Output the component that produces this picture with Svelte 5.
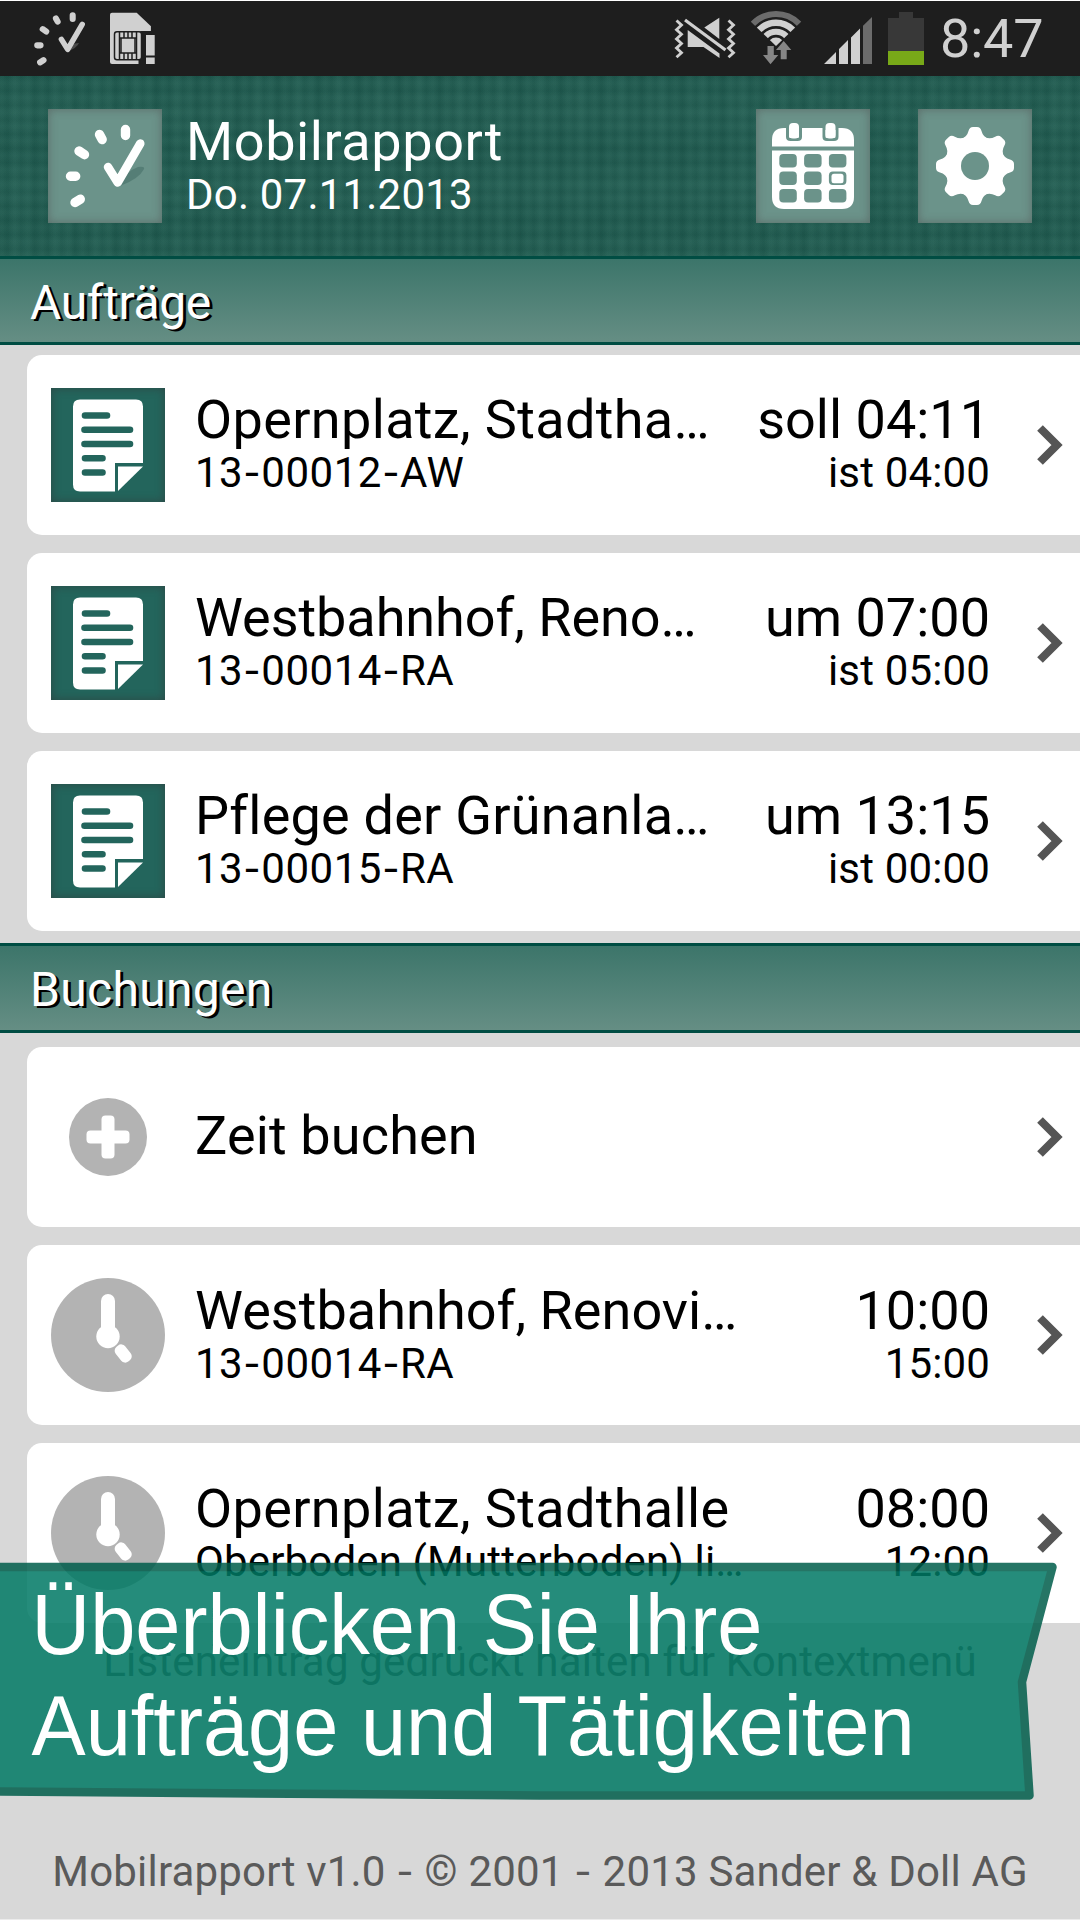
<script>
  // `ls` is the letter spacing of the title in pixels
  const jobs = [
    { title: 'Opernplatz, Stadtha…', ls: 0.35, sub: '13-00012-AW', right: 'soll 04:11', rightSub: 'ist 04:00' },
    { title: 'Westbahnhof, Reno…', ls: -0.05, sub: '13-00014-RA', right: 'um 07:00', rightSub: 'ist 05:00' },
    { title: 'Pflege der Grünanla…', ls: 0.22, sub: '13-00015-RA', right: 'um 13:15', rightSub: 'ist 00:00' },
  ];
  const bookings = [
    { icon: 'plus', title: 'Zeit buchen', ls: 0.15 },
    { icon: 'clock', title: 'Westbahnhof, Renovi…', ls: 0.05, sub: '13-00014-RA', right: '10:00', rightSub: '15:00' },
    { icon: 'clock', title: 'Opernplatz, Stadthalle', ls: 0.35, sub: 'Oberboden (Mutterboden) li…', right: '08:00', rightSub: '12:00' },
  ];
  const cells = [0, 1, 2].flatMap((r) => [0, 1, 2].map((c) => ({ x: 23.3 + c * 24.8, y: 45 + r * 17.5 })));
</script>

{#snippet dial()}
  <g stroke-linecap="round" fill="none">
    <g stroke-width="9.4">
      <path d="M77.5 20.5v6M51.500 25.500l2.700 5M31 42l5.500 3.700M22.500 67.200h5.200M27 93.500l5.300-3.300" />
    </g>
    <path d="M60 58l9.700 15.500L92.300 34.500" stroke-width="8.500" stroke-linejoin="round" />
  </g>
{/snippet}

{#snippet dashed(text)}
  {#each text.split('-') as part, i}{#if i > 0}<span class="dash">-</span>{/if}{part}{/each}
{/snippet}

{#snippet row(item, kind)}
  <li class="card">
    <div class="lead">
      {#if kind === 'doc'}
        <div class="doc">
          <svg viewBox="0 0 114 114" width="114" height="114">
            <path d="M29 11.500h56q7 0 7 7V75H64v28.500H29q-7 0-7-7V18.500q0-7 7-7z" fill="#fff" />
            <path d="M67 78.500h25L67 103z" fill="#fff" />
            <path d="M34 27.500h22M33.500 41.800h45.500M33.500 56h45.500M34 70.300h17.500M34 84.500h17.500" stroke="#23655c" stroke-width="6.600" stroke-linecap="round" />
          </svg>
        </div>
      {:else if kind === 'plus'}
        <svg viewBox="0 0 114 114" width="114" height="114">
          <circle cx="57" cy="57" r="39" fill="#b3b3b3" />
          <rect x="50.500" y="35.500" width="13" height="43" rx="4" fill="#fff" />
          <rect x="35.500" y="50.500" width="43" height="13" rx="4" fill="#fff" />
        </svg>
      {:else}
        <svg viewBox="0 0 114 114" width="114" height="114">
          <circle cx="57" cy="57" r="57" fill="#b3b3b3" />
          <path d="M57 23v34" stroke="#fff" stroke-width="14" stroke-linecap="round" />
          <circle cx="57" cy="58.500" r="11.700" fill="#fff" />
          <rect x="-6" y="-9.500" width="12" height="19" rx="5" transform="translate(72.200 75.500) rotate(-38)" fill="#fff" />
        </svg>
      {/if}
    </div>
    <div class="texts">
      <div class="t1" style="letter-spacing: {item.ls}px">{item.title}</div>
      {#if item.sub}<div class="t2" class:code={item.sub.includes('-')}>{@render dashed(item.sub)}</div>{/if}
    </div>
    {#if item.right}
      <div class="texts end">
        <div class="t1">{item.right}</div>
        <div class="t2">{item.rightSub}</div>
      </div>
    {/if}
    <svg class="chev" viewBox="0 0 26 40" width="26" height="40">
      <path d="M3 3l17 17L3 37" fill="none" stroke="#555" stroke-width="8" />
    </svg>
  </li>
{/snippet}

<div class="screen">
  <div class="status">
    <svg viewBox="0 1 200 75" width="200" height="75">
      <path d="M68 51Q71 43 79 43Q77 48 68 51z" fill="#4a4a4a" />
      <g stroke="#d0d0d0" transform="translate(22.700 2) scale(.645)">{@render dial()}</g>
      <path d="M112 12.700h24.700L150.700 26v38H112q-2 0-2-2V14.700q0-2 2-2z" fill="#d0d0d0" />
      <path d="M138.500 64V34q0-3 3-3H160v35h-21.500z" fill="#1e1e1e" />
      <path d="M150.700 31v-5h-14v5z" fill="#d0d0d0" />
      <g fill="#d0d0d0" stroke="#1e1e1e" stroke-width="1.500">
        <rect x="114.500" y="31.700" width="27" height="28" rx="2.500" />
        <path d="M119.500 32v27.500M136.500 32v27.500M120 38h16.500M120 53h16.500M124 32v6M128 32v6M132 32v6M124 53v6M128 53v6M132 53v6" />
      </g>
      <path d="M121 38v15M135 38v15" stroke="#1e1e1e" stroke-width="1.500" />
      <path d="M146 35h8.700v20.500H146zM146 57.500h8.700V64H146z" fill="#d0d0d0" />
    </svg>
    <div class="grow"></div>
    <svg viewBox="660 1 280 75" width="280" height="75">
      <defs>
        <clipPath id="fan"><path d="M776 46L734 5.500H818z" /></clipPath>
      </defs>
      <g fill="none" stroke="#d0d0d0">
        <path d="M676.500 20.500l5 4.600-5 4.600 5 4.600-5 4.600 5 4.600-5 4.600 5 4.600-5 4.600" stroke-width="2.800" />
        <path d="M728.500 20.500l5 4.600-5 4.600 5 4.600-5 4.600 5 4.600-5 4.600 5 4.600-5 4.600" stroke-width="2.800" />
        <path d="M685 20l40.500 30" stroke-width="3.200" />
      </g>
      <path d="M719.300 17.700V39L704.300 27.500zM687.700 30L719.500 53.500V58L703.500 47H687.700z" fill="#d0d0d0" />
      <g clip-path="url(#fan)" fill="none">
        <circle cx="776" cy="46" r="32" stroke="#6c6c6c" stroke-width="6" />
        <circle cx="776" cy="46" r="23.300" stroke="#d0d0d0" stroke-width="6.500" />
        <circle cx="776" cy="46" r="14.300" stroke="#d0d0d0" stroke-width="6" />
        <circle cx="776" cy="46" r="8.500" fill="#d0d0d0" />
      </g>
      <path d="M767.500 46h6.300v9h4.500L770.500 64.300 763 55h4.500zM780.700 59.300h6V50h4.600L783.700 41 776 50h4.700z" fill="#868686" stroke="#1e1e1e" stroke-width="2" paint-order="stroke" />
      <path d="M824 64l12-12v12zM839 64V49l9-9v24zM851 64V37.500l9-9V64z" fill="#d0d0d0" />
      <path d="M863 64V25.700l9-8.700v47z" fill="#6c6c6c" />
      <path d="M888 65V18h11v-6h14v6h11v47z" fill="#383838" />
      <path d="M888 51h36v14h-36z" fill="#78a918" />
    </svg>
    <time>8:47</time>
  </div>

  <header class="top">
    <div class="tile">
      <svg viewBox="0 0 114 114" width="114" height="114">
        <path d="M72 77Q78 62 90 58Q97 57 96 60Q91 70 72 77z" fill="#3f6a61" opacity=".5" />
        <g stroke="#fff">{@render dial()}</g>
      </svg>
    </div>
    <div class="brand">
      <h1>Mobilrapport</h1>
      <p>Do. 07.11.2013</p>
    </div>
    <div class="tile">
      <svg viewBox="0 0 114 114" width="114" height="114">
        <path d="M16 37.500V31Q16 19 28 19H86Q98 19 98 31v6.500zM16 41.500h82V88q0 12-12 12H28q-12 0-12-12z" fill="#fff" />
        <g fill="#fff" stroke="#6b938a" stroke-width="3">
          <path d="M31.500 18v10q0 2.500 3 2.500h7q3 0 3-2.500V18M68 18v10q0 2.500 3 2.500h7q3 0 3-2.500V18" />
        </g>
        <path d="M31.500 17h13v4h-13zM68 17h13v4H68z" fill="#6b938a" />
        <rect x="33" y="14" width="10" height="15.500" rx="4" fill="#fff" />
        <rect x="69.500" y="14" width="10" height="15.500" rx="4" fill="#fff" />
        {#each cells as c}
          <rect x={c.x} y={c.y} width="17.500" height="13.500" rx="4" fill="#6b938a" />
        {/each}
        <rect x="75.500" y="64.800" width="12" height="9.500" rx="2.500" fill="#fff" />
      </svg>
    </div>
    <div class="tile">
      <svg viewBox="0 0 114 114" width="114" height="114">
        <g fill="#fff">
          {#each [0, 45, 90, 135, 180, 225, 270, 315] as a}
            <path d="M43 30Q49 28 50.500 22Q51.500 18 55 18H59Q62.500 18 63.500 22Q65 28 71 30L57 57z" transform="rotate({a} 57 57)" />
          {/each}
          <circle cx="57" cy="57" r="29" />
        </g>
        <circle cx="57" cy="57" r="14" fill="#6b938a" />
      </svg>
    </div>
  </header>

  <h2 class="h-jobs">Aufträge</h2>
  <ul class="list jobs">
    {#each jobs as j}{@render row(j, 'doc')}{/each}
  </ul>
  <h2 class="h-bookings">Buchungen</h2>
  <ul class="list bookings">
    {#each bookings as b}{@render row(b, b.icon)}{/each}
  </ul>
  <p class="hint">Listeneintrag gedrückt halten für Kontextmenü</p>
  <footer>{@render dashed('Mobilrapport v1.0 - © 2001 - 2013 Sander & Doll AG')}</footer>

  <div class="banner">
    <svg viewBox="0 0 1080 250" width="1080" height="250">
      <g opacity=".85">
        <path d="M-10 17H1052.500L1022 132L1029.500 245.500H540L-10 241.500z" fill="#007964" stroke="#005d4b" stroke-width="8.500" stroke-linejoin="round" />
      </g>
    </svg>
    <p>Überblicken Sie Ihre<br />Aufträge und Tätigkeiten</p>
  </div>
</div>

<style>
  :global(body) { background: #d8d8d8; }
  .screen {
    position: relative;
    width: 1080px;
    height: 1920px;
    overflow: hidden;
    box-sizing: border-box;
    border-top: 1px solid #fff;
    border-bottom: 1px solid #ececec;
    background: #d8d8d8;
    font-family: Roboto, sans-serif;
    display: flex;
    flex-direction: column;
  }
  h1, h2, p, ul { margin: 0; padding: 0; font-weight: 400; }
  svg { display: block; flex: none; }
  .grow { flex: 1; }
  .status { height: 75px; flex: none; background: #1e1e1e; display: flex; }
  time { color: #d0d0d0; font-size: 54px; line-height: 75px; width: 140px; letter-spacing: -.2px; }
  .top {
    height: 180px; flex: none; box-sizing: border-box;
    padding: 33px 48px 0; display: flex;
    background-color: #245d53;
    background-image:
      repeating-linear-gradient(90deg, rgba(70, 130, 115, .09) 0 2px, rgba(0, 50, 40, .08) 7px 8px, rgba(70, 130, 115, .09) 13.500px),
      repeating-linear-gradient(90deg, rgba(0, 50, 40, .07) 0, rgba(70, 130, 115, .06) 19px, rgba(0, 50, 40, .07) 40px),
      repeating-linear-gradient(180deg, rgba(0, 50, 40, .08) 0 1px, rgba(70, 130, 115, .1) 6px 8px, rgba(0, 50, 40, .08) 14.400px),
      repeating-linear-gradient(180deg, rgba(0, 50, 40, .07) 0, rgba(70, 130, 115, .07) 38px, rgba(0, 50, 40, .07) 74px);
  }
  .tile { width: 114px; height: 114px; flex: none; background: #6b938a; box-shadow: inset 0 0 10px rgba(80, 80, 80, .6); margin-left: 48px; }
  .tile:first-child { margin-left: 0; }
  .brand { flex: 1; color: #fff; padding-left: 24px; white-space: nowrap; }
  h1 { font-size: 54px; line-height: 66px; letter-spacing: .6px; }
  .brand p { font-size: 42px; line-height: 50px; margin-top: -5px; letter-spacing: .2px; }
  h2 {
    height: 83px; flex: none; border: solid #004d43; border-width: 3px 0;
    background: linear-gradient(#3c756a, #658e84);
    color: #fff; font-size: 48px; line-height: 87px; padding-left: 30px;
    text-shadow: 3px 2px 0 #000;
  }
  .h-jobs { letter-spacing: -.35px; }
  .h-bookings { height: 84px; letter-spacing: .3px; }
  .list { list-style: none; display: flex; flex-direction: column; gap: 18px; padding-left: 27px; }
  .jobs { padding-top: 9.5px; padding-bottom: 12.5px; }
  .bookings { padding-top: 14px; }
  .card { height: 180px; flex: none; background: #fff; border-radius: 15px 0 0 15px; display: flex; align-items: center; padding: 0 17px 0 24px; }
  .doc { background: #23655c; box-shadow: inset 0 0 10px rgba(50, 60, 60, .7); }
  .texts { flex: 1; padding: 0 0 2px 30px; white-space: nowrap; color: #000; }
  .end { flex: none; text-align: right; padding-left: 0; }
  .t1 { font-size: 54px; line-height: 60px; }
  .t2 { font-size: 42px; line-height: 48px; margin-top: -1px; letter-spacing: .15px; }
  .code { letter-spacing: .5px; }
  .dash { display: inline-block; padding: 0 2.8px 0 3.2px; transform: scaleX(1.2); }
  .chev { margin-left: 47px; }
  .hint, footer { font-size: 42px; line-height: 50px; text-align: center; color: #5a5a5a; white-space: nowrap; letter-spacing: .19px; }
  .hint { margin-top: 14px; }
  footer { margin-top: 160px; }
  .banner { position: absolute; left: 0; top: 1549px; }
  .banner svg { position: absolute; left: 0; top: 0; }
  .banner p {
    position: relative; padding: 24px 0 0 33px;
    font: 85px/101px "Liberation Sans", sans-serif; color: #fff; white-space: nowrap;
    transform: scaleX(.955); transform-origin: 0 0;
  }
</style>
